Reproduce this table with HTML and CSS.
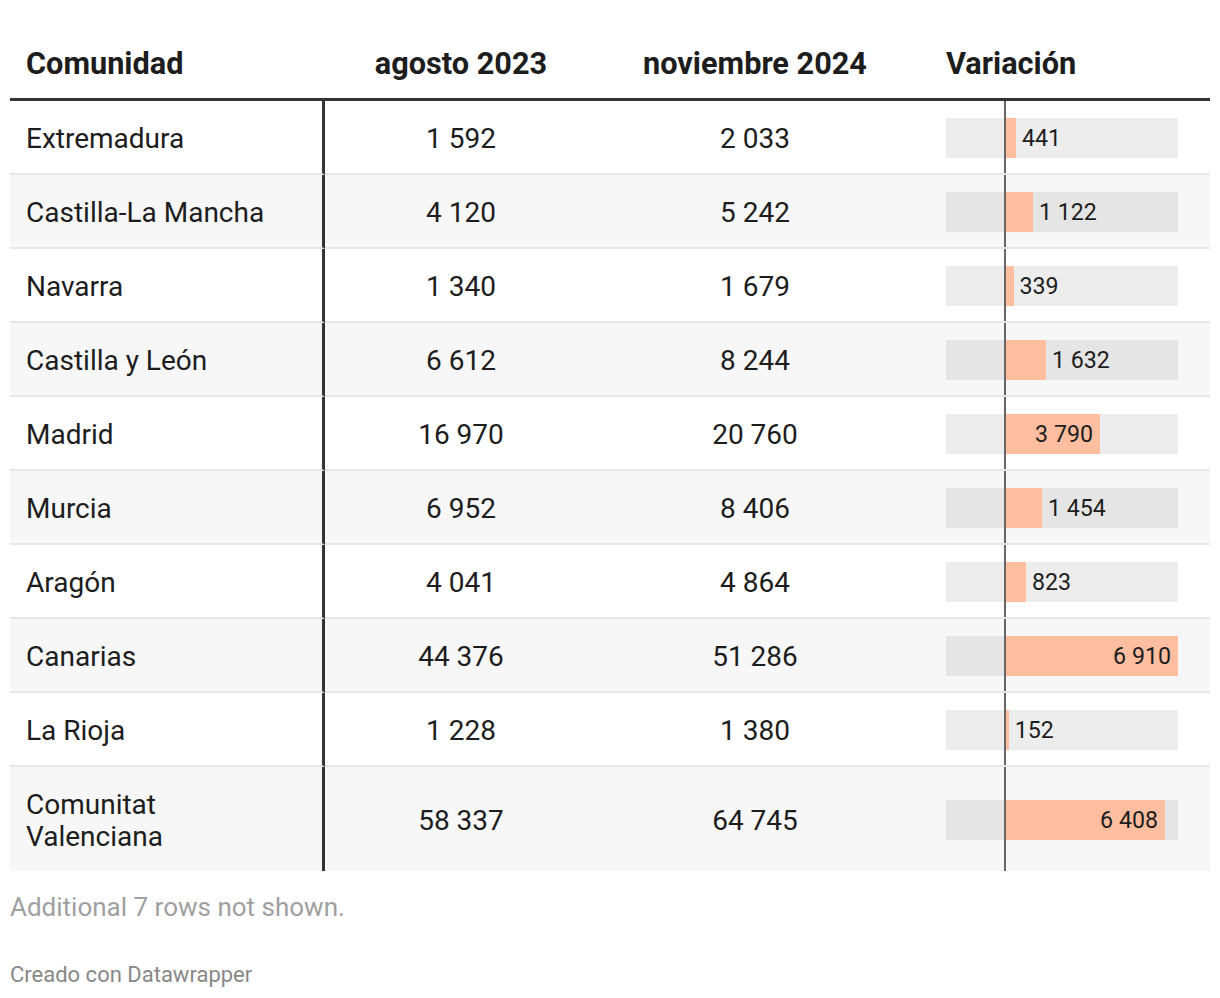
FILE: index.html
```html
<!DOCTYPE html>
<html lang="es">
<head>
<meta charset="utf-8">
<link rel="stylesheet" href="styles.css">
</head>
<body>
<div class="chart">
  <div class="table">
    <div class="row head">
      <div class="cell c1">Comunidad</div>
      <div class="cell c2">agosto 2023</div>
      <div class="cell c3">noviembre 2024</div>
      <div class="cell c4">Variación</div>
    </div>
    <div class="row">
      <div class="cell c1">Extremadura</div>
      <div class="cell c2">1 592</div>
      <div class="cell c3">2 033</div>
      <div class="cell c4"><div class="track"><div class="axis"></div><div class="bar" style="width:11px"></div><span class="lbl out">441</span></div></div>
    </div>
    <div class="row">
      <div class="cell c1">Castilla-La Mancha</div>
      <div class="cell c2">4 120</div>
      <div class="cell c3">5 242</div>
      <div class="cell c4"><div class="track"><div class="axis"></div><div class="bar" style="width:28px"></div><span class="lbl out">1 122</span></div></div>
    </div>
    <div class="row">
      <div class="cell c1">Navarra</div>
      <div class="cell c2">1 340</div>
      <div class="cell c3">1 679</div>
      <div class="cell c4"><div class="track"><div class="axis"></div><div class="bar" style="width:8.5px"></div><span class="lbl out">339</span></div></div>
    </div>
    <div class="row">
      <div class="cell c1">Castilla y León</div>
      <div class="cell c2">6 612</div>
      <div class="cell c3">8 244</div>
      <div class="cell c4"><div class="track"><div class="axis"></div><div class="bar" style="width:41px"></div><span class="lbl out">1 632</span></div></div>
    </div>
    <div class="row">
      <div class="cell c1">Madrid</div>
      <div class="cell c2">16 970</div>
      <div class="cell c3">20 760</div>
      <div class="cell c4"><div class="track"><div class="axis"></div><div class="bar" style="width:95px"><span class="lbl in">3 790</span></div></div></div>
    </div>
    <div class="row">
      <div class="cell c1">Murcia</div>
      <div class="cell c2">6 952</div>
      <div class="cell c3">8 406</div>
      <div class="cell c4"><div class="track"><div class="axis"></div><div class="bar" style="width:37px"></div><span class="lbl out">1 454</span></div></div>
    </div>
    <div class="row">
      <div class="cell c1">Aragón</div>
      <div class="cell c2">4 041</div>
      <div class="cell c3">4 864</div>
      <div class="cell c4"><div class="track"><div class="axis"></div><div class="bar" style="width:21px"></div><span class="lbl out">823</span></div></div>
    </div>
    <div class="row">
      <div class="cell c1">Canarias</div>
      <div class="cell c2">44 376</div>
      <div class="cell c3">51 286</div>
      <div class="cell c4"><div class="track"><div class="axis"></div><div class="bar" style="width:173px"><span class="lbl in">6 910</span></div></div></div>
    </div>
    <div class="row">
      <div class="cell c1">La Rioja</div>
      <div class="cell c2">1 228</div>
      <div class="cell c3">1 380</div>
      <div class="cell c4"><div class="track"><div class="axis"></div><div class="bar" style="width:3.8px"></div><span class="lbl out">152</span></div></div>
    </div>
    <div class="row last">
      <div class="cell c1">Comunitat<br>Valenciana</div>
      <div class="cell c2">58 337</div>
      <div class="cell c3">64 745</div>
      <div class="cell c4"><div class="track"><div class="axis"></div><div class="bar" style="width:160px"><span class="lbl in">6 408</span></div></div></div>
    </div>
  </div>
  <p class="note">Additional 7 rows not shown.</p>
  <p class="credit">Creado con Datawrapper</p>
</div>
</body>
</html>
```
FILE: styles.css
```css
html, body {
  margin: 0;
  padding: 0;
  background: #ffffff;
}
body {
  font-family: Roboto, "Liberation Sans", sans-serif;
  color: #1d1d1d;
}
.chart {
  padding: 0 10px;
}
.table {
  width: 1200px;
}
.row {
  display: grid;
  grid-template-columns: 315px 272px 316px 297px;
  font-size: 28px;
  line-height: 32px;
}
.row:nth-child(odd):not(.head) {
  background: #f7f7f7;
}
.cell {
  padding: 22px 0 18px;
  border-bottom: 2px solid #e6e6e6;
  display: flex;
  align-items: center;
}
.row.last .cell {
  border-bottom: none;
}
.c1 {
  padding-left: 16px;
  border-right: 3px solid #333333;
}
.c2, .c3 {
  justify-content: center;
}
.c4 {
  padding-left: 33px;
  padding-top: 0;
  padding-bottom: 0;
  align-items: stretch;
}
.head .cell {
  font-weight: 700;
  font-size: 30.7px;
  padding-top: 48px;
  padding-bottom: 18px;
  border-bottom: 3px solid #333333;
  color: #1d1d1d;
}
.head .c1 {
  border-right: none;
  padding-left: 16px;
}
.head .c4 {
  padding-left: 33px;
}
.track {
  position: relative;
  width: 232px;
  display: flex;
  align-items: center;
}
.track::before {
  content: "";
  position: absolute;
  left: 0;
  right: 0;
  top: 50%;
  height: 40px;
  margin-top: -19px;
  background: rgba(0, 0, 0, 0.07);
}
.axis {
  position: absolute;
  left: 58px;
  top: 0;
  bottom: 0;
  width: 2px;
  background: #666666;
  z-index: 2;
}
.bar {
  position: relative;
  margin-left: 59px;
  margin-top: 2px;
  height: 40px;
  background: #ffbe9f;
  flex: none;
  display: flex;
  align-items: center;
  justify-content: flex-end;
  z-index: 1;
}
.lbl {
  font-size: 23.2px;
  position: relative;
  z-index: 3;
  white-space: nowrap;
}
.lbl.out {
  margin-left: 6px;
  margin-top: 2px;
}
.lbl.in {
  padding-right: 7px;
}
.note {
  margin: 20px 0 0;
  font-size: 26px;
  line-height: 32px;
  color: #a0a0a0;
}
.credit {
  margin: 39px 0 0;
  font-size: 22px;
  line-height: 26px;
  color: #888888;
}
```
